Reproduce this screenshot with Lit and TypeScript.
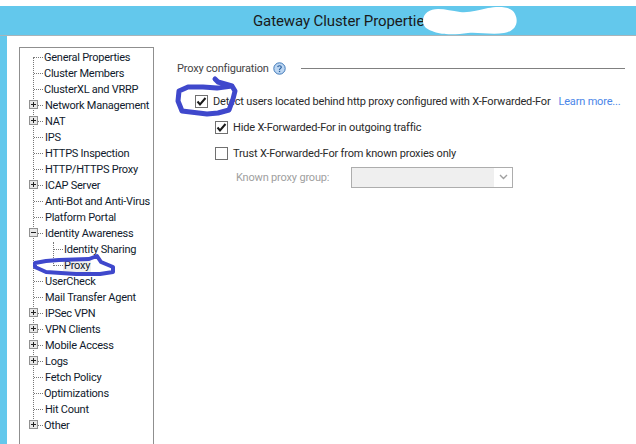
import { LitElement, html, css, nothing } from "lit";
import { customElement } from "lit/decorators.js";

type Node = { t: string; k?: "plus" | "minus"; lvl?: number; sel?: boolean; dx?: number };
const items: Node[] = [
  { t: "General Properties", dx: -1 },
  { t: "Cluster Members", dx: -1 },
  { t: "ClusterXL and VRRP", dx: -1 },
  { t: "Network Management", k: "plus" },
  { t: "NAT", k: "plus" },
  { t: "IPS" },
  { t: "HTTPS Inspection" },
  { t: "HTTP/HTTPS Proxy" },
  { t: "ICAP Server", k: "plus" },
  { t: "Anti-Bot and Anti-Virus" },
  { t: "Platform Portal" },
  { t: "Identity Awareness", k: "minus" },
  { t: "Identity Sharing", lvl: 1 },
  { t: "Proxy", lvl: 1, sel: true },
  { t: "UserCheck" },
  { t: "Mail Transfer Agent" },
  { t: "IPSec VPN", k: "plus" },
  { t: "VPN Clients", k: "plus" },
  { t: "Mobile Access", k: "plus" },
  { t: "Logs", k: "plus" },
  { t: "Fetch Policy" },
  { t: "Optimizations", dx: -1 },
  { t: "Hit Count" },
  { t: "Other", k: "plus", dx: -1 },
];

const check = html`<svg viewBox="0 0 13 13" width="13" height="13"><path class="tick" d="M2.5 6.5 L5 9.5 L10.5 3"></path></svg>`;

@customElement("app-root")
export class AppRoot extends LitElement {
  static styles = css`
    :host {
      display: block;
      position: relative;
      width: 636px;
      height: 444px;
      overflow: hidden;
      background: #fff;
      font-family: Roboto, "Noto Sans", sans-serif;
      font-size: 11px;
      color: #1c1c1c;
    }
    .window {
      margin-top: 6px;
      height: 438px;
      display: flex;
      flex-direction: column;
      background: #63c8ec;
      padding-left: 7px;
      box-sizing: border-box;
    }
    .title {
      height: 29px;
      flex: none;
      margin-left: -7px;
      display: flex;
      align-items: center;
      padding-left: 253px;
      font-size: 15px;
      letter-spacing: -0.1px;
      color: #1a1a1a;
      white-space: nowrap;
      border-bottom: 1px solid #a8b4ba;
    }
    .body {
      flex: 1;
      background: #fff;
      display: flex;
      padding: 11px 0 0 12px;
      min-height: 0;
    }
    .tree {
      width: 135px;
      flex: none;
      box-sizing: border-box;
      border: 1px solid #8f8f8f;
      border-bottom: none;
      padding-top: 1px;
      position: relative;
      letter-spacing: -0.25px;
    }
    .row {
      height: 16px;
      display: flex;
      align-items: center;
      position: relative;
      padding-left: 24px;
      white-space: nowrap;
      color: #101a2c;
    }
    .row.l1 { padding-left: 43px; }
    .row .txt { padding: 0 1px; line-height: 15px; }
    .row.sel .txt { background: #efefef; }
    .vline {
      position: absolute;
      left: 13px;
      top: 9px;
      height: 368px;
      border-left: 1px dotted #777;
    }
    .vline2 {
      position: absolute;
      left: 33px;
      top: 194px;
      height: 24px;
      border-left: 1px dotted #777;
    }
    .hline {
      position: absolute;
      left: 14px;
      width: 9px;
      top: 8px;
      border-top: 1px dotted #777;
    }
    .row.l1 .hline { left: 34px; }
    .box {
      position: absolute;
      left: 9px;
      top: 3px;
      width: 9px;
      height: 9px;
      box-sizing: border-box;
      border: 1px solid #919191;
      background: #e8e8e8;
      z-index: 1;
    }
    .box::before {
      content: "";
      position: absolute;
      left: 1px;
      top: 3px;
      width: 5px;
      height: 1px;
      background: #222;
    }
    .box.plus::after {
      content: "";
      position: absolute;
      left: 3px;
      top: 1px;
      width: 1px;
      height: 5px;
      background: #222;
    }
    .panel {
      flex: 1;
      padding: 13px 0 0 23px;
      color: #2a2a2a;
      white-space: nowrap;
      min-width: 0;
      letter-spacing: -0.18px;
    }
    .head {
      display: flex;
      align-items: center;
      height: 17px;
      color: #444;
    }
    .head .lbl { width: 89px; flex: none; }
    .help {
      margin-left: 7px;
      width: 13px;
      height: 13px;
      flex: none;
    }
    .rule {
      flex: none;
      width: 324px;
      margin-left: 15px;
      border-top: 1px solid #808080;
    }
    .opt {
      display: flex;
      align-items: center;
      height: 16px;
      gap: 5px;
    }
    .o1 { margin: 16px 0 0 18px; }
    .o2 { margin: 10px 0 0 38px; }
    .o3 { margin: 10px 0 0 38px; }
    .cb {
      width: 13px;
      height: 13px;
      flex: none;
      box-sizing: border-box;
      border: 1px solid #707070;
      background: #fff;
      position: relative;
    }
    .cb svg { position: absolute; left: -1px; top: -1px; }
    .tick { fill: none; stroke: #1a1a1a; stroke-width: 2; }
    .more { margin-left: 3px; color: #4a86e8; }
    .proxy {
      display: flex;
      align-items: center;
      margin: 5px 0 0 59px;
      height: 22px;
      color: #a0a0a0;
    }
    .proxy .lbl { width: 115px; flex: none; }
    .combo {
      width: 162px;
      height: 21px;
      box-sizing: border-box;
      border: 1px solid #adadad;
      background: #fff;
      display: flex;
      justify-content: flex-end;
    }
    .combo .fill { flex: 1; background: #efefef; }
    .combo .arrow { width: 18px; display: flex; align-items: center; justify-content: center; }
    .marks {
      position: absolute;
      left: 0;
      top: 0;
      width: 636px;
      height: 444px;
      pointer-events: none;
    }
    .ink { fill: none; stroke: #3f48cc; stroke-width: 5; stroke-linecap: round; stroke-linejoin: round; }
    .ink.wide { stroke-width: 4; }
  `;

  render() {
    return html`
      <div class="window">
        <div class="title">Gateway Cluster Propertie</div>
        <div class="body">
          <div class="tree">
            <div class="vline"></div>
            <div class="vline2"></div>
            ${items.map(
              (n) => html`<div class="row ${n.lvl ? "l1" : ""} ${n.sel ? "sel" : ""}">
                <span class="hline"></span>
                ${n.k ? html`<span class="box ${n.k}"></span>` : nothing}
                <span class="txt" style=${n.dx ? `margin-left:${n.dx}px` : ""}>${n.t}</span>
              </div>`
            )}
          </div>
          <div class="panel">
            <div class="head">
              <span class="lbl">Proxy configuration</span>
              <svg class="help" viewBox="0 0 13 13">
                <circle cx="6.5" cy="6.5" r="5.7" fill="#bcd6f2" stroke="#3f78b8"></circle>
                <path d="M4.7 5.1 C4.8 3.3 8.3 3.3 8.3 5.2 C8.3 6.4 6.5 6.4 6.5 8" fill="none" stroke="#2a5f9e" stroke-width="1.2"></path>
                <rect x="5.9" y="8.8" width="1.3" height="1.3" fill="#2a5f9e"></rect>
              </svg>
              <span class="rule"></span>
            </div>
            <div class="opt o1">
              <span class="cb">${check}</span>
              <span>Detect users located behind http proxy configured with X-Forwarded-For</span>
              <span class="more">Learn more...</span>
            </div>
            <div class="opt o2">
              <span class="cb">${check}</span>
              <span>Hide X-Forwarded-For in outgoing traffic</span>
            </div>
            <div class="opt o3">
              <span class="cb"></span>
              <span>Trust X-Forwarded-For from known proxies only</span>
            </div>
            <div class="proxy">
              <span class="lbl">Known proxy group:</span>
              <div class="combo">
                <span class="fill"></span>
                <span class="arrow">
                  <svg width="9" height="6" viewBox="0 0 9 6"><path d="M1 1 L4.5 4.5 L8 1" fill="none" stroke="#a0a0a0" stroke-width="1.4"></path></svg>
                </span>
              </div>
            </div>
          </div>
        </div>
      </div>
      <svg class="marks" viewBox="0 0 636 444">
        <path d="M423 21 C423 13 430 9 438 9 C446 9 452 11 460 12 C470 13 478 10 488 8 C498 6 512 6 515 14 C519 22 516 31 504 33 C492 35 478 32 468 33 C455 35 440 35 432 31 C426 29 423 26 423 21 Z" fill="#fff"></path>
        <path class="ink" d="M215 79 L218 82 L232 86 L235 91 L233 99 L229 110 L218 113 L207 114 L182 111 L178 101 L179 91 L188 87 L203 87 L217 88 L232 86"></path>
        <path class="ink wide" d="M35 263 L46 261 L59 260 L89 259 L97 256 L101 262 L113 267 L113 272 L100 274 L76 274 L46 272 L35 267 Z"></path>
      </svg>
    `;
  }
}
